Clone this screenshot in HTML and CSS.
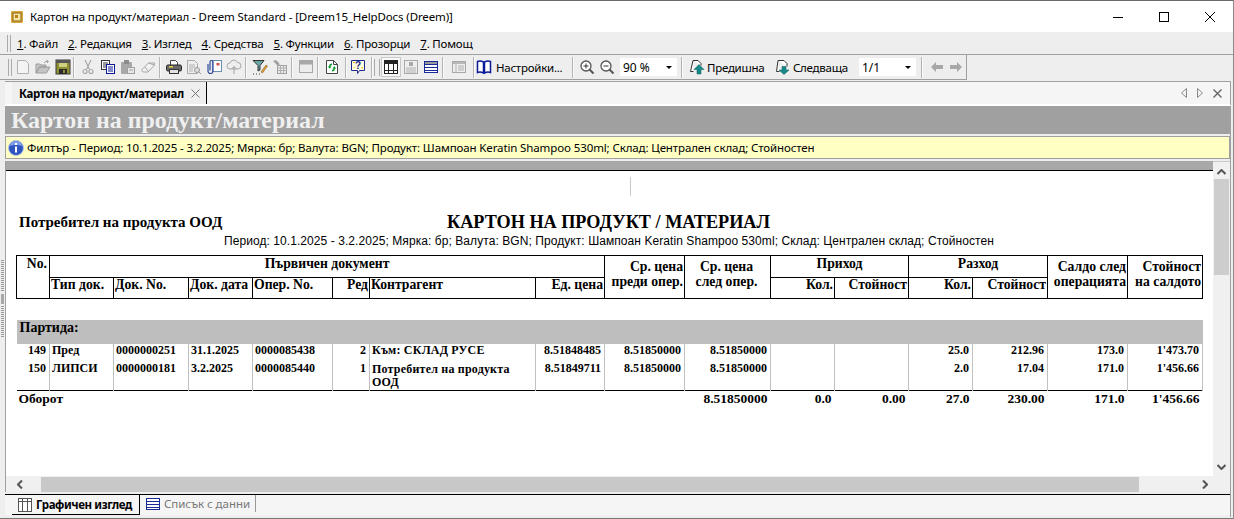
FILE: index.html
```html
<!DOCTYPE html>
<html lang="bg">
<head>
  <meta charset="UTF-8">
  <title>Картон на продукт/материал</title>
  <link rel="stylesheet" href="styles.css">
</head>
<body>
<div class="window">

  <!-- title bar -->
  <div class="titlebar">
    <svg class="app-icon" width="12" height="12" viewBox="0 0 12 12"><rect width="12" height="12" rx="1" fill="#d8a93a"/><rect x="2" y="2" width="8" height="8" fill="#f6e3a4" stroke="#8a6414"/><rect x="4" y="4" width="3" height="3" fill="#b98518"/></svg>
    <span class="title-text">Картон на продукт/материал - Dreem Standard - [Dreem15_HelpDocs (Dreem)]</span>
    <div class="win-buttons">
      <svg width="12" height="12" viewBox="0 0 12 12"><path d="M1 6.500h10" stroke="#000"/></svg>
      <svg width="12" height="12" viewBox="0 0 12 12"><rect x="1.500" y="1.500" width="9" height="9" fill="none" stroke="#000"/></svg>
      <svg width="12" height="12" viewBox="0 0 12 12"><path d="M1 1l10 10M11 1L1 11" stroke="#000"/></svg>
    </div>
  </div>

  <!-- menu -->
  <div class="menubar">
    <span class="grip"></span>
    <span class="menu-item"><u>1</u>. Файл</span>
    <span class="menu-item"><u>2</u>. Редакция</span>
    <span class="menu-item"><u>3</u>. Изглед</span>
    <span class="menu-item"><u>4</u>. Средства</span>
    <span class="menu-item"><u>5</u>. Функции</span>
    <span class="menu-item"><u>6</u>. Прозорци</span>
    <span class="menu-item"><u>7</u>. Помощ</span>
  </div>

  <!-- toolbar -->
  <div class="toolbar-row">
    <div class="toolbar">
      <span class="grip"></span>
      <div class="tb-group tb-first">
        <span class="tb-btn"><svg width="16" height="16" viewBox="0 0 16 16"><path d="M2.500 1.500h8l3 3v10h-11z" fill="#f4f4f4" stroke="#b0b0b0"/></svg></span>
        <span class="tb-btn"><svg width="16" height="16" viewBox="0 0 16 16"><path d="M1 14V5h4l1 1h5v2H4.500L1 14h10.500L15 8H4.500z" fill="#c4c4c4" stroke="#9c9c9c"/><path d="M9 4q2-2.500 4-1.500M11.500 1l2 1.500-1.500 1.500" fill="none" stroke="#a0a0a0"/></svg></span>
        <span class="tb-btn"><svg width="16" height="16" viewBox="0 0 16 16"><rect x="1" y="1" width="14" height="14" fill="#8f8f36" stroke="#3a3a3a"/><rect x="1" y="1" width="14" height="3" fill="#555"/><rect x="4" y="4" width="8" height="4" fill="#cfcf80"/><rect x="4" y="10" width="8" height="5" fill="#2a2a2a"/><rect x="8" y="11" width="2" height="3" fill="#8f8f36"/></svg></span>
      </div>
      <div class="tb-group">
        <span class="tb-btn"><svg width="16" height="16" viewBox="0 0 16 16"><path d="M5 1l4.500 9.500M11 1L6.500 10.500" stroke="#a8a8a8" stroke-width="1.200" fill="none"/><circle cx="5" cy="12.500" r="2" fill="none" stroke="#a8a8a8" stroke-width="1.200"/><circle cx="11" cy="12.500" r="2" fill="none" stroke="#a8a8a8" stroke-width="1.200"/></svg></span>
        <span class="tb-btn"><svg width="16" height="16" viewBox="0 0 16 16"><rect x="1.500" y="1.500" width="8" height="9" fill="#fff" stroke="#333"/><path d="M3 4h5M3 6h5M3 8h3" stroke="#333"/><rect x="6.500" y="5.500" width="8" height="9" fill="#fff" stroke="#0a1a9a"/><path d="M8 8h5M8 10h5M8 12h5" stroke="#0a1a9a"/></svg></span>
        <span class="tb-btn"><svg width="16" height="16" viewBox="0 0 16 16"><rect x="1" y="3" width="11" height="12" rx="1" fill="#a8a8a8"/><rect x="4" y="1" width="5" height="4" fill="#8c8c8c"/><rect x="7.500" y="8.500" width="7" height="6" fill="#e8e8e8" stroke="#a0a0a0"/><path d="M9 11h4" stroke="#a0a0a0"/></svg></span>
        <span class="tb-btn"><svg width="16" height="16" viewBox="0 0 16 16"><path d="M1.500 11l7-7h6v2l-6.500 7h-5z" fill="#f2f2f2" stroke="#a8a8a8"/><path d="M5 8l3 4M8.500 4l6 2" stroke="#a8a8a8"/></svg></span>
      </div>
      <div class="tb-group">
        <span class="tb-btn"><svg width="16" height="16" viewBox="0 0 16 16"><path d="M4.500 6V1.500h5l2 2V6" fill="#fff" stroke="#444"/><rect x=".5" y="6" width="15" height="6" rx="1.500" fill="#6a6a6a" stroke="#222"/><rect x="3" y="7" width="4" height="1.500" fill="#e6d24a"/><rect x="3.500" y="10.500" width="9" height="4" fill="#e2e2e2" stroke="#333"/></svg></span>
        <span class="tb-btn"><svg width="16" height="16" viewBox="0 0 16 16"><path d="M1.500 1.500h7l3 3v10h-10z" fill="#eee" stroke="#a8a8a8"/><path d="M3 6h6M3 8h6M3 10h4M3 12h4" stroke="#b0b0b0"/><circle cx="11" cy="11" r="2.500" fill="#ddd" stroke="#999"/><path d="M13 13l2 2" stroke="#999"/></svg></span>
        <span class="tb-btn"><svg width="16" height="16" viewBox="0 0 16 16"><rect x="6.500" y="1.500" width="9" height="11" fill="#fff" stroke="#6a90b0"/><rect x="10.500" y="4" width="3" height="2.500" fill="#d05050"/><path d="M2 5v7a2.500 2.500 0 005 0V3a1.500 1.500 0 00-3 0v8.500" fill="none" stroke="#2d4a9a" stroke-width="1.200"/></svg></span>
        <span class="tb-btn"><svg width="16" height="16" viewBox="0 0 16 16"><path d="M4 10a3 3 0 010-6 4 4 0 017.500-.500A3.200 3.200 0 0112 10z" fill="#eee" stroke="#a8a8a8"/><path d="M8 15V7.500M5.500 10L8 7.500l2.500 2.500" fill="none" stroke="#a0a0a0"/></svg></span>
      </div>
      <div class="tb-group">
        <span class="tb-btn"><svg width="16" height="16" viewBox="0 0 16 16"><path d="M1 1.500h11L8 6.500V11L6 12V6.500z" fill="#6aa7a7" stroke="#333"/><path d="M9 13l5-7 1.500 1-5 7z" fill="#e0a030" stroke="#7a4a10" stroke-width=".5"/><path d="M1 15h7" stroke="#444" stroke-dasharray="1 2"/></svg></span>
        <span class="tb-btn"><svg width="16" height="16" viewBox="0 0 16 16"><rect x="5.500" y="6.500" width="9" height="8" fill="#e8e8e8" stroke="#a0a0a0"/><path d="M5.500 9h9M5.500 11.500h9M8.500 6.500v8M11.500 6.500v8" stroke="#b0b0b0"/><path d="M1 2l3-1 3 3 1 3-3-1z" fill="#a0a0a0"/></svg></span>
      </div>
      <div class="tb-group">
        <span class="tb-btn"><svg width="16" height="16" viewBox="0 0 16 16"><rect x="1.500" y="1.500" width="13" height="12" fill="#ececec" stroke="#a8a8a8"/><rect x="2" y="2" width="12" height="3.500" fill="#a8a8a8"/></svg></span>
      </div>
      <div class="tb-group tb-refresh">
        <span class="tb-btn"><svg width="16" height="16" viewBox="0 0 16 16"><path d="M2.500 1.500h7l4 4v9h-11z" fill="#fff" stroke="#444"/><path d="M9.500 1.500v4h4" fill="none" stroke="#444"/><path d="M8 4.500a3 3 0 00-3 3H3.800l1.900 2.200L7.600 7.500H6.300A1.800 1.800 0 018 6zM8 12.500a3 3 0 003-3h1.200l-1.900-2.200L8.400 9.500h1.300A1.800 1.800 0 018 11z" fill="#0a9a2a"/></svg></span>
      </div>
      <div class="tb-group tb-help">
        <span class="tb-btn"><svg width="16" height="16" viewBox="0 0 16 16"><path d="M1.500 1.500h13v10h-5l-2 3v-3h-6z" fill="#fffde0" stroke="#1a2a8a"/><path d="M3 3h2v1H3zM11.500 8h1.500v1.500h-1.500zM3.500 8h1v1h-1z" fill="#e8c830"/><text class="help-q" x="8" y="10">?</text></svg></span>
      </div>
      <span class="grip grip-double"></span>
      <div class="tb-group tb-views">
        <span class="tb-btn tb-active"><svg width="14" height="14" viewBox="0 0 14 14"><rect x=".5" y=".5" width="13" height="13" fill="#fff" stroke="#222"/><rect x="1" y="1" width="12" height="2" fill="#222"/><path d="M.5 3.500h13M.5 10.500h13M4.500 .5v13M9.500 .5v13" stroke="#222"/></svg></span>
        <span class="tb-btn"><svg width="14" height="14" viewBox="0 0 14 14"><rect x=".5" y=".5" width="13" height="13" fill="#eee" stroke="#a8a8a8"/><rect x="5" y="2" width="4" height="4" fill="#a8a8a8"/><path d="M2 8h10M2 10h10M2 12h10" stroke="#b0b0b0"/></svg></span>
        <span class="tb-btn"><svg width="14" height="14" viewBox="0 0 14 14"><rect x=".5" y="1.500" width="13" height="11" fill="#fff" stroke="#1a2a9a"/><rect x="1" y="2" width="12" height="2" fill="#9a9a9a"/><path d="M.5 4.500h13M.5 7.500h13M.5 10.500h13" stroke="#1a2a9a"/></svg></span>
      </div>
      <div class="tb-group tb-single">
        <span class="tb-btn"><svg width="14" height="14" viewBox="0 0 14 14"><rect x=".5" y="1.500" width="13" height="11" fill="#eee" stroke="#a8a8a8"/><rect x="1" y="2" width="12" height="2" fill="#b8b8b8"/><path d="M4 4v8.500M6 6h6M6 8h6M6 10h6" stroke="#b0b0b0"/></svg></span>
      </div>
      <div class="tb-group tb-text">
        <span class="tb-btn"><svg width="16" height="16" viewBox="0 0 16 16"><path d="M1.500 2.500q3-1 6 .5v11q-3-1.500-6-.5zM14.500 2.500q-3-1-6 .5v11q3-1.500 6-.5z" fill="#fff" stroke="#0a1a9a" stroke-width="1.500"/></svg></span>
        <span class="tb-label">Настройки...</span>
      </div>
      <div class="tb-group tb-zoom">
        <span class="tb-btn"><svg width="16" height="16" viewBox="0 0 16 16"><circle cx="7" cy="7" r="5" fill="#fff" stroke="#555" stroke-width="1.300"/><path d="M10.500 10.500l4 4" stroke="#555" stroke-width="2"/><path d="M4.500 7h5M7 4.500v5" stroke="#333"/></svg></span>
        <span class="tb-btn"><svg width="16" height="16" viewBox="0 0 16 16"><circle cx="7" cy="7" r="5" fill="#fff" stroke="#555" stroke-width="1.300"/><path d="M10.500 10.500l4 4" stroke="#555" stroke-width="2"/><path d="M4.500 7h5" stroke="#333"/></svg></span>
        <span class="combo"><span>90 %</span><i class="combo-arrow"></i></span>
      </div>
      <div class="tb-group tb-pages">
        <span class="tb-btn"><svg width="16" height="16" viewBox="0 0 16 16"><path d="M4 1.500h5l3 3v2M4 1.500L1.500 12.500h3" fill="#fff" stroke="#333"/><path d="M10 5.500l5 5h-3v4.500H8v-4.500H5z" fill="#168a8a" stroke="#0a5a5a" stroke-width=".5"/></svg></span>
        <span class="tb-label tb-prev-label">Предишна</span>
        <span class="tb-btn tb-next"><svg width="16" height="16" viewBox="0 0 16 16"><path d="M3 1.500h6l3 3v3M3 1.500L1.500 12.500h3" fill="#fff" stroke="#333"/><path d="M7 7.500h4v3.500h3l-5 4.500L4 11h3z" fill="#168a8a" stroke="#0a5a5a" stroke-width=".5"/></svg></span>
        <span class="tb-label tb-next-label">Следваща</span>
        <span class="combo combo-page"><span>1/1</span><i class="combo-arrow"></i></span>
      </div>
      <div class="tb-arrows">
        <svg width="12" height="10" viewBox="0 0 12 10"><path d="M0 5l5-5v3h7v4H5v3z" fill="#a8a8a8"/></svg>
        <svg width="12" height="10" viewBox="0 0 12 10"><path d="M12 5L7 0v3H0v4h7v3z" fill="#a8a8a8"/></svg>
      </div>
    </div>
  </div>

  <!-- main document area -->
  <div class="workspace">
    <div class="side-grip"><span class="side-dots"></span><span class="side-arrows"></span><span class="side-dots"></span></div>
    <div class="doc">

      <div class="doc-tabs">
        <div class="doc-tab">
          <span class="doc-tab-name">Картон на продукт/материал</span>
          <svg width="9" height="9" viewBox="0 0 9 9"><path d="M.5 .5l8 8M8.500 .5l-8 8" stroke="#777"/></svg>
        </div>
        <div class="doc-tab-tools">
          <svg width="6" height="10" viewBox="0 0 6 10"><path d="M5.500 .5v9L.5 5z" fill="none" stroke="#888"/></svg>
          <svg width="6" height="10" viewBox="0 0 6 10"><path d="M.5 .5v9L5.500 5z" fill="none" stroke="#888"/></svg>
          <svg width="9" height="9" viewBox="0 0 9 9"><path d="M.5 .5l8 8M8.500 .5l-8 8" stroke="#666" stroke-width="1.400"/></svg>
        </div>
      </div>

      <div class="doc-heading">Картон на продукт/материал</div>

      <div class="filter-bar">
        <svg width="16" height="16" viewBox="0 0 16 16"><circle cx="8" cy="8" r="7.500" fill="#2f55c0" stroke="#b8c4e0"/><path d="M2 6a6 5 0 0112 0q-6-2-12 0z" fill="#7f9ce4"/><rect x="7" y="3" width="2" height="2" fill="#fff"/><rect x="7" y="6.500" width="2" height="6" fill="#fff"/></svg>
        <span>Филтър - Период: 10.1.2025 - 3.2.2025; Мярка: бр; Валута: BGN; Продукт: Шампоан Keratin Shampoo 530ml; Склад: Централен склад; Стойностен</span>
      </div>

      <div class="report-pane">
        <div class="report-row">
          <div class="report-view">
            <div class="report-topbar"></div>
            <div class="report-page">
              <div class="page-mark"></div>
              <div class="report-head">
                <div class="company">Потребител на продукта ООД</div>
                <div class="report-title">КАРТОН НА ПРОДУКТ / МАТЕРИАЛ</div>
              </div>
              <div class="report-sub">Период: 10.1.2025 - 3.2.2025; Мярка: бр; Валута: BGN; Продукт: Шампоан Keratin Shampoo 530ml; Склад: Централен склад; Стойностен</div>

              <table class="card-table">
                <colgroup>
                  <col class="c-no"><col class="c-type"><col class="c-docno"><col class="c-date"><col class="c-oper"><col class="c-line"><col class="c-party"><col class="c-price"><col class="c-avg1"><col class="c-avg2"><col class="c-qty1"><col class="c-val1"><col class="c-qty2"><col class="c-val2"><col class="c-bal"><col class="c-balv">
                </colgroup>
                <thead>
                  <tr class="head-top">
                    <th rowspan="2" class="top-r">No.</th>
                    <th colspan="7">Първичен документ</th>
                    <th rowspan="2" class="wrap">Ср. цена<br>преди опер.</th>
                    <th rowspan="2" class="wrap wrap-c">Ср. цена<br>след опер.</th>
                    <th colspan="2">Приход</th>
                    <th colspan="2">Разход</th>
                    <th rowspan="2" class="wrap">Салдо след<br>операцията</th>
                    <th rowspan="2" class="wrap">Стойност<br>на салдото</th>
                  </tr>
                  <tr class="head-sub">
                    <th class="l">Тип док.</th>
                    <th class="l">Док. No.</th>
                    <th class="l">Док. дата</th>
                    <th class="l">Опер. No.</th>
                    <th class="r">Ред</th>
                    <th class="l">Контрагент</th>
                    <th class="r">Ед. цена</th>
                    <th class="r">Кол.</th>
                    <th class="r">Стойност</th>
                    <th class="r">Кол.</th>
                    <th class="r">Стойност</th>
                  </tr>
                </thead>
                <tbody>
                  <tr class="spacer"><td colspan="16"></td></tr>
                  <tr class="band"><td colspan="16">Партида:</td></tr>
                  <tr class="data first">
                    <td class="r">149</td><td>Пред</td><td>0000000251</td><td>31.1.2025</td><td>0000085438</td><td class="r">2</td><td class="party">Към: СКЛАД РУСЕ</td><td class="r">8.51848485</td><td class="r">8.51850000</td><td class="r">8.51850000</td><td></td><td></td><td class="r">25.0</td><td class="r">212.96</td><td class="r">173.0</td><td class="r">1'473.70</td>
                  </tr>
                  <tr class="data second">
                    <td class="r">150</td><td>ЛИПСИ</td><td>0000000181</td><td>3.2.2025</td><td>0000085440</td><td class="r">1</td><td class="party party-wrap">Потребител на продукта<br>ООД</td><td class="r">8.51849711</td><td class="r">8.51850000</td><td class="r">8.51850000</td><td></td><td></td><td class="r">2.0</td><td class="r">17.04</td><td class="r">171.0</td><td class="r">1'456.66</td>
                  </tr>
                  <tr class="total">
                    <td colspan="9" class="l">Оборот</td><td class="r">8.51850000</td><td class="r">0.0</td><td class="r">0.00</td><td class="r">27.0</td><td class="r">230.00</td><td class="r">171.0</td><td class="r">1'456.66</td>
                  </tr>
                </tbody>
              </table>
            </div>
          </div>
          <div class="vscroll">
            <svg width="9" height="6" viewBox="0 0 9 6"><path d="M.5 5l4-4 4 4" fill="none" stroke="#555" stroke-width="2"/></svg>
            <div class="vscroll-thumb"></div>
            <svg class="vscroll-down" width="9" height="6" viewBox="0 0 9 6"><path d="M.5 1l4 4 4-4" fill="none" stroke="#555" stroke-width="2"/></svg>
          </div>
        </div>
        <div class="hscroll">
          <svg width="6" height="9" viewBox="0 0 6 9"><path d="M5 .5l-4 4 4 4" fill="none" stroke="#555" stroke-width="2"/></svg>
          <div class="hscroll-thumb"></div>
          <svg width="6" height="9" viewBox="0 0 6 9"><path d="M1 .5l4 4-4 4" fill="none" stroke="#555" stroke-width="2"/></svg>
        </div>
      </div>

      <div class="view-tabs">
        <div class="view-tab active">
          <svg width="14" height="14" viewBox="0 0 14 14"><rect x=".5" y=".5" width="13" height="13" fill="#fff" stroke="#555"/><path d="M.5 3.500h13M4.500 .5v13M9.500 .5v13" stroke="#555"/></svg>
          <span>Графичен изглед</span>
        </div>
        <div class="view-tab">
          <svg width="14" height="12" viewBox="0 0 14 12"><rect x=".5" y=".5" width="13" height="11" fill="#fff" stroke="#1a2a9a"/><path d="M.5 3.500h13M.5 6.500h13M.5 9.500h13" stroke="#1a2a9a"/></svg>
          <span>Списък с данни</span>
        </div>
      </div>

    </div>
  </div>
</div>
</body>
</html>
```

FILE: styles.css
```css
* {
  box-sizing: border-box;
}

html, body {
  margin: 0;
  padding: 0;
  height: 100%;
  overflow: hidden;
}

body {
  background-color: #eeeeee;
  font-family: "Noto Sans", "Open Sans", sans-serif;
  font-size: 11.5px;
  color: #000;
}

.window {
  width: 1234px;
  height: 519px;
  border-top: 1px solid #6a6a6a;
  border-right: 1px solid #8a8a8a;
  display: flex;
  flex-direction: column;
}

/* title bar */
.titlebar {
  height: 31px;
  background: #fff;
  display: flex;
  align-items: center;
  padding-left: 11px;
  flex: none;
}

.title-text {
  margin-left: 7px;
  white-space: nowrap;
  letter-spacing: -0.11px;
}

.win-buttons {
  margin-left: auto;
  display: flex;
  gap: 34px;
  padding-right: 17px;
}

/* menu */
.menubar {
  height: 23px;
  flex: none;
  display: flex;
  align-items: center;
  background: #eeeeee;
  border-bottom: 1px solid #a0a0a0;
  padding-left: 7px;
  white-space: nowrap;
}

.menu-item {
  margin-right: 10px;
  letter-spacing: -0.2px;
}

.grip {
  width: 4px;
  height: 17px;
  border-left: 1px solid #aaa;
  border-right: 1px solid #aaa;
  flex: none;
  margin-right: 6px;
}

.toolbar .grip-double {
  width: 6px;
  margin: 0 0 0 2px;
}

/* toolbar */
.toolbar-row {
  height: 26px;
  flex: none;
  background: #eeeeee;
}

.toolbar {
  width: 967px;
  height: 25px;
  display: flex;
  align-items: center;
  border-right: 1px solid #a0a0a0;
  border-bottom: 1px solid #a0a0a0;
  padding-left: 8px;
  white-space: nowrap;
}

.toolbar > .grip {
  margin-right: 1px;
}

.tb-group {
  display: flex;
  align-items: center;
  height: 21px;
  padding: 0 1px 0 4px;
  border-right: 1px solid #b4b4b4;
  box-shadow: 1px 0 0 #fafafa;
  flex: none;
}

.tb-first {
  padding: 0;
}

.tb-refresh {
  padding-right: 3px;
}

.tb-help {
  padding: 0 3px 0 2px;
}

.tb-btn {
  width: 20px;
  height: 20px;
  display: flex;
  align-items: center;
  justify-content: center;
  flex: none;
}

.tb-active {
  background: #f8f8f8;
  outline: 1px solid #c8c8c8;
  outline-offset: -1px;
}

.help-q {
  font-family: "Liberation Sans", sans-serif;
  font-weight: bold;
  font-size: 10px;
  text-anchor: middle;
  fill: #1a2a8a;
}

.tb-views {
  padding-left: 0;
}

.tb-single {
  padding: 0 4px 0 6px;
}

.tb-text {
  width: 99px;
  padding: 0;
}

.tb-label {
  margin-left: 2px;
  letter-spacing: -0.25px;
}

.tb-zoom {
  padding: 0 4px 0 4px;
}

.combo {
  width: 57px;
  height: 18px;
  margin-left: 3px;
  background: #fff;
  display: flex;
  align-items: center;
  padding-left: 3px;
  font-size: 12px;
  letter-spacing: 0;
}

.combo-page {
  margin-left: 10px;
}

.combo-arrow {
  margin-left: auto;
  margin-right: 5px;
  border-left: 3px solid transparent;
  border-right: 3px solid transparent;
  border-top: 3px solid #000;
}

.tb-pages {
  padding: 0 5px 0 5px;
}

.tb-prev-label {
  width: 59px;
  margin-left: 0;
}

.tb-next-label {
  width: 56px;
  margin-left: 0;
}

.tb-next {
  margin-left: 7px;
}

.tb-arrows {
  display: flex;
  gap: 7px;
  padding-left: 9px;
}

/* document */
.workspace {
  flex: 1;
  display: flex;
  min-height: 0;
  padding-bottom: 1px;
  border-bottom: 1px solid #777;
}

.side-grip {
  width: 5px;
  flex: none;
  display: flex;
  flex-direction: column;
  align-items: center;
  justify-content: center;
  gap: 2px;
}

.side-dots {
  width: 3px;
  height: 32px;
  background: repeating-linear-gradient(#999 0 1px, transparent 1px 2px);
}

.side-arrows {
  width: 3px;
  height: 10px;
  background: #a8a8a8;
}

.doc {
  width: 1226px;
  height: 100%;
  display: flex;
  flex-direction: column;
  border-right: 1px solid #a0a0a0;
}

.doc-tabs {
  height: 25px;
  flex: none;
  display: flex;
  align-items: stretch;
  background: #f5f5f5;
  border-top: 1px solid #a0a0a0;
  padding-left: 7px;
  margin-right: -1px;
  border-right: 1px solid #a0a0a0;
  border-bottom: 2px solid #fff;
}

.doc-tab {
  width: 195px;
  background: #efefef;
  border-right: 1px solid #000;
  display: flex;
  align-items: center;
  gap: 7px;
  padding-left: 7px;
}

.doc-tab-name {
  font-weight: bold;
  letter-spacing: -0.35px;
  white-space: nowrap;
}

.doc-tab-tools {
  margin-left: auto;
  display: flex;
  align-items: center;
  gap: 10px;
  padding-right: 8px;
}

.doc-heading {
  height: 28px;
  flex: none;
  background: #a0a0a0;
  color: #f0f0f0;
  font-family: "Liberation Serif", serif;
  font-weight: bold;
  font-size: 23.900px;
  line-height: 28px;
  padding-left: 6px;
  white-space: nowrap;
}

.filter-bar {
  height: 23px;
  flex: none;
  margin-top: 2px;
  background: #ffffc4;
  border: 1px solid #a0a0a0;
  display: flex;
  align-items: center;
  gap: 3px;
  padding-left: 2px;
  white-space: nowrap;
  letter-spacing: -0.12px;
}

.report-pane {
  height: 331px;
  margin-top: 2px;
  flex: none;
  display: flex;
  flex-direction: column;
  border-left: 1px solid #a0a0a0;
}

.report-row {
  flex: 1;
  display: flex;
  min-height: 0;
}

.report-view {
  flex: 1;
  min-width: 0;
  display: flex;
  flex-direction: column;
  background: #fff;
  overflow: hidden;
}

.report-topbar {
  height: 10px;
  flex: none;
  background: #a8a8a8;
  border-bottom: 1px solid #000;
}

.report-page {
  padding: 6px 0 0 10px;
  flex: 1;
  font-family: "Liberation Serif", serif;
}

.page-mark {
  width: 1px;
  height: 19px;
  margin-left: 614px;
  background: #c8c8c8;
}

.report-head {
  display: flex;
  align-items: flex-end;
  height: 36px;
  padding-left: 3px;
  white-space: nowrap;
}

.company {
  width: 428px;
  font-weight: bold;
  font-size: 15px;
  padding-bottom: 1px;
}

.report-title {
  font-weight: bold;
  font-size: 18.200px;
  line-height: 20px;
}

.report-sub {
  font-family: "Liberation Sans", sans-serif;
  font-size: 12px;
  line-height: 14px;
  margin: 2px 0 0 208px;
  letter-spacing: 0.07px;
  white-space: nowrap;
}

/* card table */
.card-table {
  margin-top: 7px;
  border-collapse: collapse;
  table-layout: fixed;
  width: 1186px;
  font-size: 12px;
  font-weight: bold;
  white-space: nowrap;
}

.c-no { width: 33px; }
.c-type { width: 64px; }
.c-docno { width: 75px; }
.c-date { width: 64px; }
.c-oper { width: 80px; }
.c-line { width: 37px; }
.c-party { width: 166px; }
.c-price { width: 69px; }
.c-avg1 { width: 80px; }
.c-avg2 { width: 86px; }
.c-qty1 { width: 64px; }
.c-val1 { width: 74px; }
.c-qty2 { width: 64px; }
.c-val2 { width: 75px; }
.c-bal { width: 80px; }
.c-balv { width: 75px; }

.card-table th {
  border: 1px solid #000;
  padding: 0 1px;
  font-size: 13.700px;
  vertical-align: top;
  text-align: center;
  overflow: hidden;
}

.head-top th {
  height: 22px;
  line-height: 15px;
}

.head-sub th {
  height: 21px;
  line-height: 14px;
}

.card-table th.l,
.card-table td.l {
  text-align: left;
}

.card-table th.r,
.card-table td.r {
  text-align: right;
}

.card-table th.wrap {
  line-height: 15px;
  padding-top: 3px;
  text-align: right;
  padding-right: 1px;
}

.card-table th.wrap-c {
  padding-right: 3px;
  text-align: center;
}

.card-table th.top-r {
  text-align: right;
  padding-right: 2px;
}

.spacer td {
  height: 21px;
}

.band td {
  height: 24px;
  background: #bebebe;
  padding: 0 0 7px 3px;
  font-size: 14px;
  line-height: 14px;
}

.data td {
  border-left: 1px solid #c0c0c0;
  border-right: 1px solid #c0c0c0;
  padding: 0 3px 0 2px;
  vertical-align: top;
  font-size: 12px;
  line-height: 12px;
  overflow: hidden;
}

.data td:first-child {
  border-left: 0;
}

.data.first td {
  height: 18px;
}

.data.second td {
  height: 29px;
}

.data td.party {
  letter-spacing: 0.2px;
}

.data td.party-wrap {
  line-height: 13px;
  padding-top: 1px;
}

.total td {
  border-top: 1px solid #000;
  height: 17px;
  padding: 0 3px 0 2px;
  font-size: 13.500px;
  line-height: 15px;
  vertical-align: top;
}

/* scrollbars */
.vscroll {
  width: 17px;
  flex: none;
  background: #f0f0f0;
  border-top: 1px solid #c8c8c8;
  display: flex;
  flex-direction: column;
  align-items: center;
  padding-top: 7px;
}

.vscroll-thumb {
  width: 15px;
  height: 96px;
  margin-top: 4px;
  background: #cdcdcd;
}

.vscroll-down {
  margin-top: auto;
  margin-bottom: 6px;
}

.hscroll {
  height: 16px;
  flex: none;
  background: #f0f0f0;
  display: flex;
  align-items: center;
  padding-left: 11px;
}

.hscroll-thumb {
  width: 1098px;
  height: 15px;
  margin: 0 63px 0 18px;
  background: #c8c8c8;
}

.view-tabs {
  height: 21px;
  margin-top: 2px;
  flex: none;
  display: flex;
  background: #f5f5f5;
  border-top: 1px solid #000;
  padding-left: 7px;
}

.view-tab {
  display: flex;
  align-items: center;
  gap: 4px;
  color: #777;
  padding-left: 6px;
  width: 116px;
  white-space: nowrap;
  letter-spacing: -0.05px;
  border-right: 1px solid #999;
  height: 17px;
}

.view-tab.active {
  width: 128px;
  height: 20px;
  color: #000;
  font-weight: bold;
  letter-spacing: -0.4px;
  border-right: 1px solid #000;
  border-bottom: 1px solid #000;
  background: #f5f5f5;
}
```
